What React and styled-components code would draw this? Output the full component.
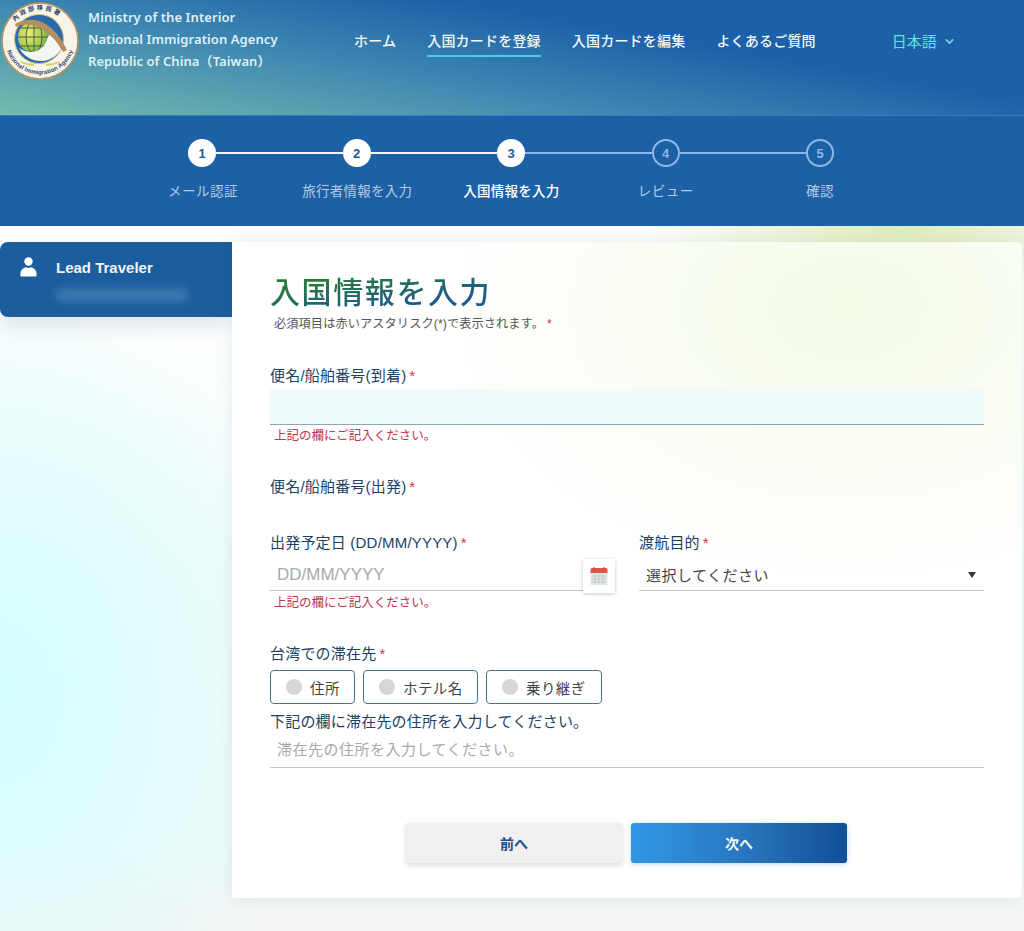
import React from 'react'
import styled, { createGlobalStyle } from 'styled-components'
import { FiChevronDown } from 'react-icons/fi'

const GlobalStyle = createGlobalStyle`
  * { box-sizing: border-box; }
  html, body { margin: 0; padding: 0; }
  body {
    font-family: "Liberation Sans", "Noto Sans CJK JP", sans-serif;
    background: #f5f6f6;
  }
`

const Page = styled.div`
  width: 1024px;
  height: 931px;
  overflow: hidden;
`

const Header = styled.header`
  height: 115px;
  display: flex;
  align-items: flex-start;
  background: linear-gradient(10deg, #74bcae 0%, #3e87b2 38%, #1c60a8 66%, #1c60a8 100%);
`

const LogoWrap = styled.div`
  width: 78px;
  height: 78px;
  margin: 2px 0 0 1px;
  flex: none;
`

const Agency = styled.div`
  margin: 6px 0 0 9px;
  width: 240px;
  font-family: "Noto Sans", "Noto Sans CJK JP", sans-serif;
  font-size: 13px;
  font-weight: 600;
  line-height: 22px;
  letter-spacing: 0.08px;
  color: #dff0f2;
`

const Nav = styled.nav`
  margin: 30px 0 0 26px;
  display: flex;
  gap: 31px;
`

const NavLink = styled.a`
  height: 27px;
  font-family: "Noto Sans CJK JP", sans-serif;
  font-size: 14px;
  font-weight: 500;
  line-height: 20px;
  letter-spacing: 0.2px;
  color: #f2f7f8;
  white-space: nowrap;
  border-bottom: 2px solid ${p => (p.$active ? '#4fcbe6' : 'transparent')};
`

const Lang = styled.div`
  margin: 31px 0 0 76px;
  display: flex;
  align-items: center;
  gap: 6px;
  font-family: "Noto Sans CJK JP", sans-serif;
  font-size: 15px;
  line-height: 20px;
  color: #62e4d4;
`

const Stepper = styled.section`
  height: 111px;
  padding-top: 23px;
  background: #1c60a5;
  border-top: 1px solid #2f7fc4;
`

const Track = styled.div`
  width: 646px;
  margin: 0 0 0 188px;
  display: flex;
  align-items: center;
`

const Circle = styled.div`
  width: 28px;
  height: 28px;
  flex: none;
  border-radius: 50%;
  display: flex;
  align-items: center;
  justify-content: center;
  font-size: 13px;
  font-weight: 700;
  color: ${p => (p.$done ? '#1c5a9a' : '#8fb7e4')};
  background: ${p => (p.$done ? '#fff' : 'transparent')};
  border: 2px solid ${p => (p.$done ? '#fff' : '#8fb7e4')};
`

const Line = styled.div`
  flex: 1;
  height: 2px;
  background: ${p => (p.$done ? '#f4f8fc' : '#8fb7e4')};
`

const StepLabels = styled.div`
  margin: 13px 0 0 126px;
  width: 771px;
  display: grid;
  grid-template-columns: repeat(5, 1fr);
`

const StepLabel = styled.div`
  text-align: center;
  font-family: "Noto Sans CJK JP", sans-serif;
  font-size: 13.5px;
  font-weight: ${p => (p.$current ? 500 : 400)};
  line-height: 20px;
  letter-spacing: ${p => (p.$wide ? '0.5px' : '0.25px')};
  color: ${p => (p.$current ? '#fff' : '#b4c9e2')};
`

const Body = styled.main`
  height: 705px;
  padding: 16px 2px 0 0;
  display: flex;
  align-items: flex-start;
  background:
    radial-gradient(260px 60px at 88% 0%, #dcecb9 0%, rgba(220, 236, 185, 0) 100%),
    radial-gradient(300px 420px at 0% 66%, #d4fcfc 0%, rgba(212, 252, 252, 0) 100%),
    linear-gradient(180deg, #fdfefd 0%, #fdfefe 15%, #effcfb 50%, #eefbfa 88%, #f3f5f5 97%);
`

const Sidebar = styled.aside`
  width: 232px;
  height: 75px;
  flex: none;
  padding: 14px 0 0 20px;
  display: grid;
  grid-template-columns: 36px 1fr;
  grid-template-rows: 22px 1fr;
  align-items: center;
  color: #fff;
  background: #1c5d9e;
  border-radius: 8px 0 0 8px;
  box-shadow: 0 10px 20px rgba(30, 60, 90, 0.12);
`

const TravelerName = styled.div`
  font-size: 15px;
  font-weight: 700;
  color: #eef4fa;
`

const BlurredMail = styled.div`
  grid-column: 2;
  width: 132px;
  height: 12px;
  margin-top: -6px;
  border-radius: 6px;
  background: #447db4;
  filter: blur(5px);
`

const Card = styled.div`
  flex: 1;
  height: 656px;
  padding: 28px 38px 0;
  background:
    radial-gradient(420px 290px at 78% 10%, #f4fbe8 0%, rgba(244, 251, 232, 0) 100%),
    #fff;
  border-radius: 0 6px 6px 0;
  box-shadow: 0 0 14px rgba(40, 60, 80, 0.1);
`

const Title = styled.h1`
  margin: 0;
  width: max-content;
  font-family: "Noto Sans CJK JP", sans-serif;
  font-size: 30px;
  font-weight: 500;
  line-height: 40px;
  letter-spacing: 1.6px;
  color: transparent;
  background: linear-gradient(172deg, #2a7a3a 25%, #1c5a8f 75%);
  -webkit-background-clip: text;
  background-clip: text;
`

const Note = styled.p`
  margin: 6px 0 0 4px;
  font-size: 12.2px;
  line-height: 16px;
  letter-spacing: 0.1px;
  color: #555;
`

const Star = styled.span`
  margin-left: 3px;
  color: #d0334a;
`

const Label = styled.label`
  display: block;
  font-size: 15px;
  line-height: 20px;
  letter-spacing: 0.2px;
  color: #1c3f63;
`

const FirstLabel = styled(Label)`
  margin-top: 34px;
`

const FilledInput = styled.div`
  height: 36px;
  margin-top: 3px;
  background: #effcfb;
  border-bottom: 1px solid #8fa5b0;
`

const ErrorText = styled.div`
  margin: ${p => p.$mt || 4}px 0 0 4px;
  font-size: 12.5px;
  line-height: 14px;
  color: #c4314b;
`

const DepartLabel = styled(Label)`
  margin-top: 34px;
`

const TwoCols = styled.div`
  margin-top: 36px;
  display: grid;
  grid-template-columns: 345px 345px;
  gap: 24px;
`

const Underlined = styled.div`
  display: flex;
  align-items: center;
  justify-content: space-between;
  height: ${p => p.$h || 32}px;
  margin-top: ${p => p.$mt ?? 6}px;
  padding: 0 0 ${p => p.$pb || 0}px 7px;
  font-size: ${p => p.$size || 17}px;
  letter-spacing: ${p => p.$spacing || 0}px;
  color: ${p => (p.$dark ? '#444' : '#a9a9a9')};
  border-bottom: 1px solid #c4c8cb;
`

const CalendarButton = styled.div`
  width: 32px;
  height: 34px;
  margin-bottom: -2px;
  display: flex;
  align-items: center;
  justify-content: center;
  background: #fff;
  box-shadow: 0 1px 4px rgba(0, 0, 0, 0.22);
`

const Arrow = styled.span`
  width: 0;
  height: 0;
  margin-right: 8px;
  border-left: 4.5px solid transparent;
  border-right: 4.5px solid transparent;
  border-top: 6px solid #333;
`

const StayLabel = styled(Label)`
  margin-top: 34px;
`

const RadioRow = styled.div`
  margin-top: 6px;
  display: flex;
  gap: 8px;
`

const RadioBox = styled.div`
  height: 34px;
  width: ${p => p.$w}px;
  padding-left: 15px;
  display: flex;
  align-items: center;
  gap: 8px;
  font-size: 14.5px;
  letter-spacing: 0.4px;
  color: #444;
  border: 1px solid #44758f;
  border-radius: 4px;
`

const Dot = styled.span`
  width: 16px;
  height: 16px;
  border-radius: 50%;
  background: #d6d6d6;
`

const AddressLabel = styled(Label)`
  margin-top: 8px;
`

const Buttons = styled.div`
  margin: 55px 0 0 136px;
  display: flex;
  gap: 9px;
`

const Button = styled.button`
  width: 216px;
  height: 40px;
  border: none;
  border-radius: 3px;
  font-family: inherit;
  font-size: 14px;
  font-weight: 700;
  color: ${p => (p.$primary ? '#f2f8fd' : '#1c4f8f')};
  background: ${p => (p.$primary ? 'linear-gradient(90deg, #3097e6 0%, #2a78c0 50%, #114f96 100%)' : '#f0f0f0')};
  box-shadow: ${p => (p.$primary ? '0 1px 5px rgba(48, 130, 210, 0.35)' : '0 2px 5px rgba(0, 0, 0, 0.16)')};
`

const Logo = () => (
  <svg width="78" height="78" viewBox="0 0 78 78">
    <defs>
      <path id="ringBottom" d="M6 49a35 35 0 0 0 66 0" />
      <path id="ringTop" d="M11 25a31.5 31.5 0 0 1 56 0" />
      <radialGradient id="globe" cx="0.35" cy="0.4" r="0.75">
        <stop offset="0" stopColor="#f0ea7a" />
        <stop offset="0.55" stopColor="#a9cc4e" />
        <stop offset="1" stopColor="#4f8f50" />
      </radialGradient>
    </defs>
    <circle cx="39" cy="39" r="38" fill="#f8f4ea" stroke="#b9925f" strokeWidth="1.6" />
    <text fontSize="6" fontWeight="700" fill="#2c4464" fontFamily="Liberation Sans, sans-serif" textLength="86">
      <textPath href="#ringBottom">National Immigration Agency</textPath>
    </text>
    <text fontSize="6.2" fontWeight="700" fill="#2c4464" fontFamily="Noto Sans CJK TC, sans-serif" letterSpacing="2.2">
      <textPath href="#ringTop" startOffset="6">內政部移民署</textPath>
    </text>
    <circle cx="38" cy="37" r="24.5" fill="#2a6bb0" stroke="#e1c565" strokeWidth="1" />
    <circle cx="33" cy="35" r="16" fill="url(#globe)" />
    <g fill="none" stroke="#39573a" strokeWidth="0.9">
      <ellipse cx="33" cy="35" rx="8" ry="16" />
      <path d="M33 19v32M17 35h32M20 26h26M20 44h26" />
    </g>
    <path d="M18 46c9 6 21 6 27-6 2-5 3-8 6-9 3 5 7 10 9 16-4 7-10 11-18 12-11 1-19-5-24-13z" fill="#f4f6f4" />
    <path d="M14 22C26 15 40 17 50 26c7 6 12 14 16 22l-4 2C56 38 44 26 30 23c-6-1-11 0-15 2z" fill="#b5905f" />
    <path d="M20 60c4 2 9 3 13 3M45 63c5 0 9-1 13-3" fill="none" stroke="#d5d35a" strokeWidth="1.8" />
  </svg>
)

const PersonIcon = () => (
  <svg width="17" height="20" viewBox="0 0 17 20" fill="currentColor">
    <circle cx="8.5" cy="4.5" r="4.2" />
    <path d="M0.5 19.500v-3.200C0.5 12.800 3.500 10.600 6 10.200c1.600.9 3.400.9 5 0 2.500.4 5.500 2.600 5.500 6.100v3.200z" />
  </svg>
)

const CalendarIcon = () => (
  <svg width="18" height="20" viewBox="0 0 18 20">
    <rect x="0.5" y="6" width="17" height="13" fill="#e4e6e6" />
    <path d="M0.5 7V3.5a1.5 1.5 0 0 1 1.5-1.5h14a1.5 1.5 0 0 1 1.5 1.5V7z" fill="#d9584a" />
    <path d="M4 1v2M14 1v2" stroke="#b84438" strokeWidth="1" />
    <path d="M2 10h14M2 13h14M2 16h14M5 8.500v9M9 8.500v9M13 8.500v9" stroke="#b9bdbd" strokeWidth="0.7" />
  </svg>
)

const navItems = ['ホーム', '入国カードを登録', '入国カードを編集', 'よくあるご質問']
const steps = ['メール認証', '旅行者情報を入力', '入国情報を入力', 'レビュー', '確認']

export default function App() {
  return (
    <Page>
      <GlobalStyle />
      <Header>
        <LogoWrap><Logo /></LogoWrap>
        <Agency>
          Ministry of the Interior<br />
          National Immigration Agency<br />
          Republic of China（Taiwan）
        </Agency>
        <Nav>
          {navItems.map((item, i) => (
            <NavLink key={item} $active={i === 1}>{item}</NavLink>
          ))}
        </Nav>
        <Lang>日本語 <FiChevronDown size={13} strokeWidth={3} /></Lang>
      </Header>

      <Stepper>
        <Track>
          {steps.map((s, i) => (
            <React.Fragment key={s}>
              <Circle $done={i < 3}>{i + 1}</Circle>
              {i < 4 && <Line $done={i < 2} />}
            </React.Fragment>
          ))}
        </Track>
        <StepLabels>
          {steps.map((s, i) => (
            <StepLabel key={s} $current={i === 2} $wide={i === 0 || i === 3}>{s}</StepLabel>
          ))}
        </StepLabels>
      </Stepper>

      <Body>
        <Sidebar>
          <PersonIcon />
          <TravelerName>Lead Traveler</TravelerName>
          <BlurredMail />
        </Sidebar>
        <Card>
          <Title>入国情報を入力</Title>
          <Note>必須項目は赤いアスタリスク(*)で表示されます。<Star>*</Star></Note>

          <FirstLabel>便名/船舶番号(到着)<Star>*</Star></FirstLabel>
          <FilledInput />
          <ErrorText>上記の欄にご記入ください。</ErrorText>

          <DepartLabel>便名/船舶番号(出発)<Star>*</Star></DepartLabel>

          <TwoCols>
            <div>
              <Label>出発予定日 (DD/MM/YYYY)<Star>*</Star></Label>
              <Underlined>
                DD/MM/YYYY
                <CalendarButton><CalendarIcon /></CalendarButton>
              </Underlined>
              <ErrorText $mt={5}>上記の欄にご記入ください。</ErrorText>
            </div>
            <div>
              <Label>渡航目的<Star>*</Star></Label>
              <Underlined $dark $size={15} $spacing={0.5}>
                選択してください
                <Arrow />
              </Underlined>
            </div>
          </TwoCols>

          <StayLabel>台湾での滞在先<Star>*</Star></StayLabel>
          <RadioRow>
            <RadioBox $w={85}><Dot />住所</RadioBox>
            <RadioBox $w={115}><Dot />ホテル名</RadioBox>
            <RadioBox $w={116}><Dot />乗り継ぎ</RadioBox>
          </RadioRow>
          <AddressLabel>下記の欄に滞在先の住所を入力してください。</AddressLabel>
          <Underlined $size={15} $h={36} $mt={0} $pb={3} $spacing={0.5}>滞在先の住所を入力してください。</Underlined>

          <Buttons>
            <Button>前へ</Button>
            <Button $primary>次へ</Button>
          </Buttons>
        </Card>
      </Body>
    </Page>
  )
}
